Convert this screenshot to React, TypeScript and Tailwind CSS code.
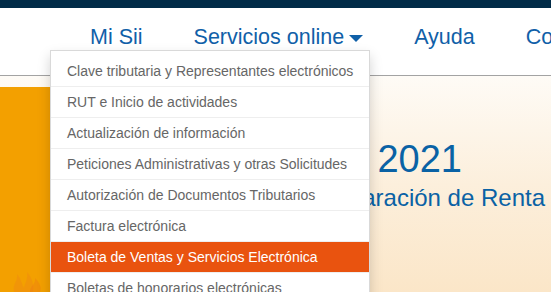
import React from "react";

const items = [
  "Clave tributaria y Representantes electrónicos",
  "RUT e Inicio de actividades",
  "Actualización de información",
  "Peticiones Administrativas y otras Solicitudes",
  "Autorización de Documentos Tributarios",
  "Factura electrónica",
  "Boleta de Ventas y Servicios Electrónica",
  "Boletas de honorarios electrónicas",
];

export default function App() {
  return (
    <div className="relative w-[551px] h-[292px] overflow-hidden bg-white font-['Liberation_Sans',Arial,sans-serif]">
      <div className="h-[8px] bg-[#012b47]" />
      <div className="h-[68px] border-b border-[#a3a3a3] bg-white">
        <nav className="flex gap-[51px] pl-[90px] pt-[19px] text-[21.5px] leading-none text-[#1060a8] whitespace-nowrap">
          <span>Mi Sii</span>
          <span className="flex items-center">
            Servicios online
            <svg width="14" height="7" viewBox="0 0 14 7" className="ml-[5px] mt-[2px]">
              <path d="M0 0 L14 0 L7 7 Z" fill="#1060a8" />
            </svg>
          </span>
          <span>Ayuda</span>
          <span>Contacto</span>
        </nav>
      </div>
      <div className="flex h-[216px] bg-[linear-gradient(180deg,#fefbf6_0%,#fcefdc_50%,#fbe6c8_100%)]">
        <div className="mt-[11px] w-[250px] h-[205px] relative overflow-hidden bg-[#f3a000]">
          <svg width="60" height="40" viewBox="0 0 60 40" className="absolute left-0 bottom-0">
            <path d="M14 40 C12 32 18 30 17 22 C22 28 22 33 24 36 C25 30 28 28 27 20 C33 27 34 34 33 40 Z" fill="#ee7f1c" opacity="0.3" />
            <path d="M30 40 C30 34 36 32 35 26 C40 31 42 36 40 40 Z" fill="#ec6f1a" opacity="0.3" />
          </svg>
        </div>
        <div className="flex-1 flex flex-col items-end pr-[6px] pt-[64px] text-[#0a62a5] leading-none whitespace-nowrap">
          <div className="mr-[83px] text-[38px]">Operación Renta 2021</div>
          <div className="mt-[8px] text-[24px]">Declaración de Renta</div>
        </div>
      </div>

      <div className="absolute left-[50px] top-[50px] w-[320px] bg-white border border-[rgba(0,0,0,0.15)] pt-[5px] shadow-[0_6px_12px_rgba(0,0,0,0.175)]">
        {items.map((t, i) => (
          <div
            key={t}
            className={
              i === 6
                ? "h-[31px] border-b border-[#eeeeee] flex items-center px-[16px] text-[14px] bg-[#e9530f] text-white whitespace-nowrap"
                : "h-[31px] border-b border-[#eeeeee] flex items-center px-[16px] text-[14px] text-[#666666] whitespace-nowrap"
            }
          >
            {t}
          </div>
        ))}
      </div>
    </div>
  );
}
